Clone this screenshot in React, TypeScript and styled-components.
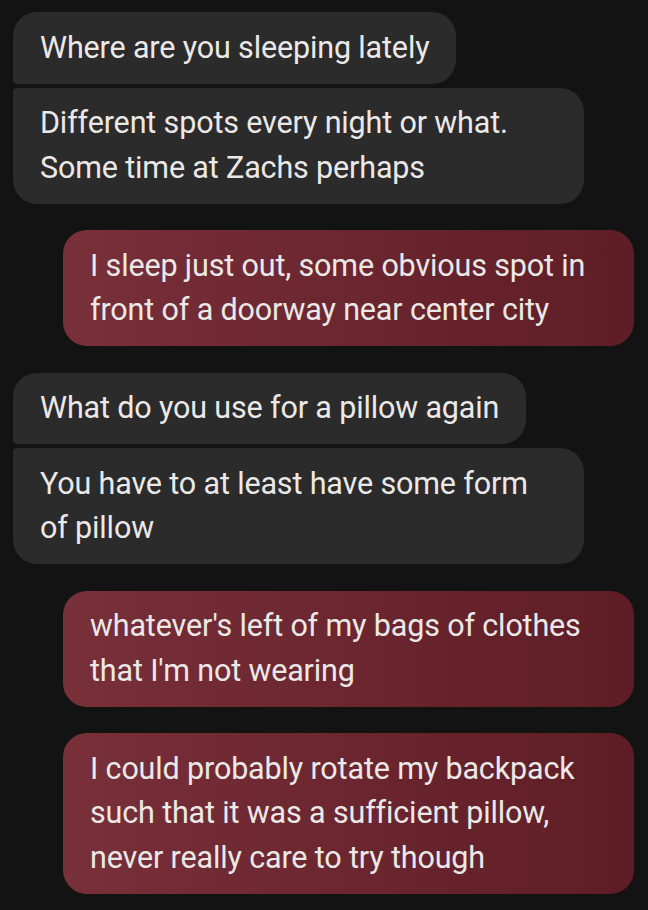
import styled, { createGlobalStyle, css } from "styled-components";

type Side = "in" | "out";
type Pos = "single" | "first" | "last";

interface IMessage {
  id: number;
  side: Side;
  pos: Pos;
  lines: string[];
}

const messages: IMessage[] = [
  { id: 1, side: "in", pos: "first", lines: ["Where are you sleeping lately"] },
  {
    id: 2,
    side: "in",
    pos: "last",
    lines: ["Different spots every night or what.", "Some time at Zachs perhaps"],
  },
  {
    id: 3,
    side: "out",
    pos: "single",
    lines: ["I sleep just out, some obvious spot in", "front of a doorway near center city"],
  },
  { id: 4, side: "in", pos: "first", lines: ["What do you use for a pillow again"] },
  {
    id: 5,
    side: "in",
    pos: "last",
    lines: ["You have to at least have some form", "of pillow"],
  },
  {
    id: 6,
    side: "out",
    pos: "single",
    lines: ["whatever's left of my bags of clothes", "that I'm not wearing"],
  },
  {
    id: 7,
    side: "out",
    pos: "single",
    lines: [
      "I could probably rotate my backpack",
      "such that it was a sufficient pillow,",
      "never really care to try though",
    ],
  },
];

// group consecutive bubbles from the same side
const groups = messages.reduce<IMessage[][]>((acc, msg) => {
  const last = acc[acc.length - 1];
  if (last && last[0].side === msg.side && msg.pos === "last") last.push(msg);
  else acc.push([msg]);
  return acc;
}, []);

const App = (): JSX.Element => {
  return (
    <>
      <GlobalStyle />
      <Thread>
        {groups.map((group) => (
          <Group key={group[0].id} $side={group[0].side}>
            {group.map((msg) => (
              <Bubble
                key={msg.id}
                $side={msg.side}
                $pos={msg.pos}
                $full={msg.lines.length > 1}>
                {msg.lines.map((line, i) => (
                  <Line key={i}>{line}</Line>
                ))}
              </Bubble>
            ))}
          </Group>
        ))}
      </Thread>
    </>
  );
};

export default App;

const GlobalStyle = createGlobalStyle`
  html, body {
    margin: 0;
    padding: 0;
    background: #131313;
  }
  body {
    font-family: Roboto, "Noto Sans", sans-serif;
    -webkit-font-smoothing: antialiased;
  }
`;

const Thread = styled.main`
  display: flex;
  flex-direction: column;
  gap: 26.5px;
  width: 648px;
  min-height: 910px;
  box-sizing: border-box;
  padding: 12px 14px 0 13px;
  background: #131313;
`;

const Group = styled.section<{ $side: Side }>`
  display: flex;
  flex-direction: column;
  gap: 4px;
  align-items: ${({ $side }) => ($side === "in" ? "flex-start" : "flex-end")};
`;

const radius = (side: Side, pos: Pos) => {
  if (side === "out" || pos === "single") return "24px";
  if (pos === "first") return "24px 24px 24px 4px";
  return "4px 24px 24px 24px";
};

const Bubble = styled.div<{ $side: Side; $pos: Pos; $full: boolean }>`
  box-sizing: border-box;
  width: ${({ $full }) => ($full ? "571px" : "fit-content")};
  max-width: 571px;
  padding: 13.5px 27px;
  border-radius: ${({ $side, $pos }) => radius($side, $pos)};
  color: #ebe8e8;
  font-size: 30.5px;
  font-weight: 400;
  line-height: 44.5px;
  letter-spacing: -0.15px;

  ${({ $side }) =>
    $side === "in"
      ? css`
          background: #2b2b2b;
        `
      : css`
          background: linear-gradient(90deg, #783039 0%, #6a252e 55%, #5e1d25 100%);
        `}
`;

const Line = styled.div`
  white-space: nowrap;
`;
